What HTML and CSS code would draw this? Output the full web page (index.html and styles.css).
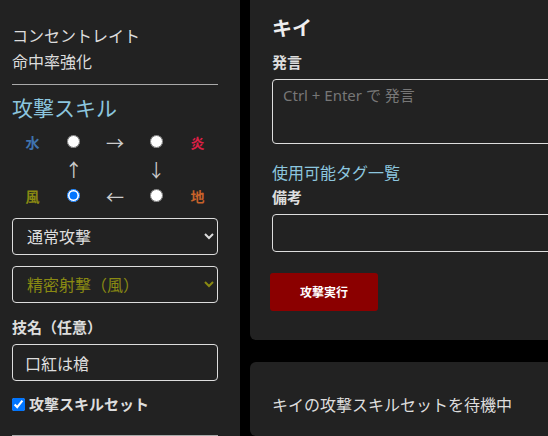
FILE: index.html
```html
<!DOCTYPE html>
<html lang="ja">
<head>
  <meta charset="UTF-8" />
  <meta name="viewport" content="width=device-width, initial-scale=1.0"/>
  <title>攻撃スキル</title>
  <link rel="stylesheet" href="styles.css">
</head>
<body>

  <!-- Sidebar -->
  <aside class="sidebar">
    <p class="buff">コンセントレイト</p>
    <p class="buff">命中率強化</p>
    <hr class="rule">

    <h2 class="skill-title">攻撃スキル</h2>
    <div class="element-grid">
      <span class="el water">水</span>
      <span><input type="radio" name="el"></span>
      <span class="arrow">→</span>
      <span><input type="radio" name="el"></span>
      <span class="el fire">炎</span>

      <span></span>
      <span class="arrow">↑</span>
      <span></span>
      <span class="arrow">↓</span>
      <span></span>

      <span class="el wind">風</span>
      <span><input type="radio" name="el" checked></span>
      <span class="arrow">←</span>
      <span><input type="radio" name="el"></span>
      <span class="el earth">地</span>
    </div>

    <select class="field">
      <option>通常攻撃</option>
    </select>
    <select class="field olive">
      <option>精密射撃（風）</option>
    </select>

    <label class="label" for="waza">技名（任意）</label>
    <input class="field" type="text" id="waza" value="口紅は槍">

    <label class="check">
      <input type="checkbox" checked>
      <span>攻撃スキルセット</span>
    </label>
    <hr class="rule">
  </aside>

  <!-- Main -->
  <main class="main">
    <section class="panel">
      <h3 class="name">キイ</h3>
      <label class="label small" for="say">発言</label>
      <textarea class="field area" id="say" placeholder="Ctrl + Enter で 発言"></textarea>
      <a class="tags" href="#">使用可能タグ一覧</a>
      <label class="label small" for="note">備考</label>
      <input class="field" type="text" id="note">
      <button class="attack">攻撃実行</button>
    </section>

    <section class="panel waiting">
      <p>キイの攻撃スキルセットを待機中</p>
    </section>
  </main>

</body>
</html>
```

FILE: styles.css
```css
* {
  box-sizing: border-box;
  margin: 0;
  padding: 0;
  font-family: 'Noto Sans', 'Noto Sans CJK JP', sans-serif;
}

body {
  background: #000;
  color: #ddd;
  display: flex;
  gap: 10px;
  height: 100vh;
  overflow: hidden;
}

.sidebar {
  background: #222;
  width: 240px;
  flex-shrink: 0;
  padding: 23px 22px 0 12px;
}

.buff {
  font-size: 16px;
  line-height: 26px;
}

.rule {
  border: none;
  border-top: 1px solid #aaa;
  margin: 9px 0;
}

.skill-title {
  color: #8cc6df;
  font-size: 21px;
  font-weight: normal;
  line-height: 28px;
  margin-top: 0;
}

.element-grid {
  display: grid;
  grid-template-columns: repeat(5, 1fr);
  grid-auto-rows: 27px;
  margin: 6px 0 9px;
}

.element-grid span {
  display: flex;
  justify-content: center;
  align-items: center;
}

.element-grid input {
  width: 13px;
  height: 13px;
  margin: 0;
}

.el {
  font-size: 14px;
  font-weight: bold;
}

.water { color: #3f73ad; }
.fire { color: #dc1f45; }
.wind { color: #8a8a12; }
.earth { color: #c8622a; }

.arrow {
  font-size: 18px;
  color: #ccc;
}

.field {
  display: block;
  width: 100%;
  height: 37px;
  background: transparent;
  color: #ddd;
  border: 1px solid #ddd;
  border-radius: 4px;
  font-size: 16px;
  padding: 0 12px;
  margin-bottom: 11px;
}

select.field {
  padding: 0 8px 0 10px;
}

.olive {
  color: #8a8a12;
}

.label {
  display: block;
  font-weight: bold;
  font-size: 15px;
  line-height: 26px;
  margin-bottom: 4px;
}

.sidebar .field[type="text"] {
  margin-bottom: 13px;
}

.check {
  display: flex;
  align-items: center;
  gap: 4px;
  font-weight: bold;
  font-size: 15px;
  line-height: 20px;
}

.check input {
  width: 13px;
  height: 13px;
  margin: 0;
}

.check + .rule {
  margin-top: 21px;
}

/* Right column */
.main {
  width: 340px;
  flex-shrink: 0;
  display: flex;
  flex-direction: column;
  gap: 22px;
}

.panel {
  background: #222;
  border-radius: 6px;
  padding: 0 22px;
}

.panel:first-child {
  margin-top: -10px;
  padding-top: 25px;
  padding-bottom: 29px;
}

.name {
  font-size: 20px;
  line-height: 28px;
  color: #eee;
}

.label.small {
  margin: 7px 0 5px;
  line-height: 24px;
}

.area {
  height: 65px;
  resize: none;
  padding: 4px 10px;
  font-size: 15px;
  margin-bottom: 17px;
}

.area::placeholder {
  color: #777;
}

.tags {
  display: block;
  color: #8cc6df;
  text-decoration: none;
  font-size: 16px;
  line-height: 24px;
}

.tags + .label.small {
  margin: 0 0 5px;
}

.panel .field[type="text"] {
  height: 38px;
  margin-bottom: 21px;
}

.attack {
  width: 108px;
  height: 38px;
  margin-left: -2px;
  background: #8b0000;
  color: #fff;
  border: none;
  border-radius: 3px;
  font-weight: bold;
  font-size: 12px;
  cursor: pointer;
}

.waiting {
  flex: 1;
  padding-top: 31px;
}

.waiting p {
  font-size: 16px;
  line-height: 24px;
}
```
